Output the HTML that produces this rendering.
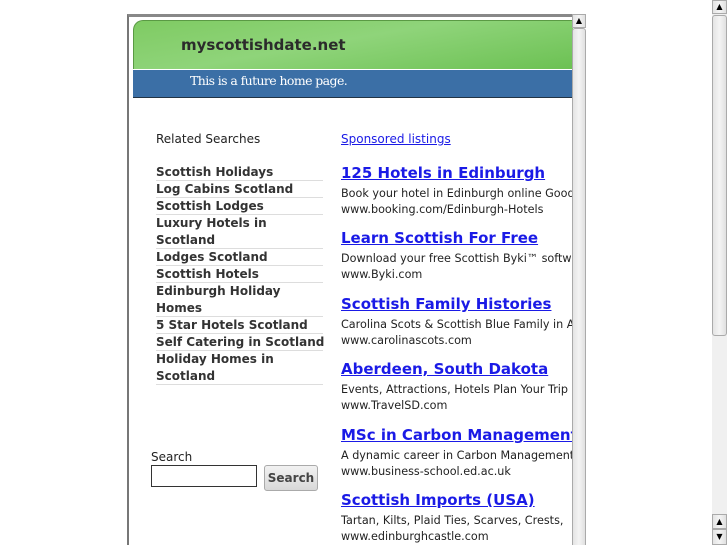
<!DOCTYPE html>
<html><head><style>
html,body{margin:0;width:727px;height:545px;overflow:hidden}
body{background:#fff;font-family:"DejaVu Sans","Liberation Sans",sans-serif;position:relative}
.a{position:absolute}
.frame{left:127px;top:14px;width:458px;height:531px;border-left:2px solid #777;border-top:3px solid #888;background:#fff;box-sizing:border-box}
.green{left:133px;top:20px;width:439px;height:48px;border-radius:10px 0 0 0;background:linear-gradient(170deg,#7fcb63 0%,#8fd47a 45%,#6cc153 100%);border-top:1px solid #5a9a44;border-left:1px solid #5a9a44}
.blue{left:133px;top:69px;width:439px;height:27px;background:#3b6fa6;border-top:1px solid #fff;border-bottom:1px solid #234}
.list div{font-weight:bold;font-size:12px;color:#333;line-height:17px;box-shadow:inset 0 -1px 0 #ddd;white-space:nowrap}
.list div.w{white-space:normal}
.ad{position:absolute;left:341px;width:231px;overflow:hidden;white-space:nowrap}
.ad b{display:block;font-size:15px;color:#1a1ae6;text-decoration:underline;line-height:21px;margin-bottom:2px}
.ad span{display:block;font-size:11.2px;color:#222;line-height:16px}
.sb{background:linear-gradient(90deg,#e4e4e4,#f4f4f4,#e0e0e0);border:1px solid #aaa;box-sizing:border-box}
</style></head><body>
<div class="a frame"></div>
<div class="a green"></div>
<div class="a" style="left:181px;top:36px;font-weight:bold;font-size:15px;color:#2b2b2b">myscottishdate.net</div>
<div class="a blue"></div>
<div class="a" style="left:190px;top:73px;font-family:'DejaVu Serif',serif;font-size:12.5px;letter-spacing:-0.6px;color:#fff">This is a future home page.</div>
<div class="a" style="left:156px;top:132px;font-size:12px;color:#222">Related Searches</div>
<div class="a" style="left:341px;top:132px;font-size:12px;color:#1a1ae6;text-decoration:underline">Sponsored listings</div>
<div class="a list" style="left:156px;top:164px;width:167px">
<div>Scottish Holidays</div><div>Log Cabins Scotland</div><div>Scottish Lodges</div><div class="w">Luxury Hotels in Scotland</div><div>Lodges Scotland</div><div>Scottish Hotels</div><div class="w">Edinburgh Holiday Homes</div><div>5 Star Hotels Scotland</div><div>Self Catering in Scotland</div><div class="w">Holiday Homes in Scotland</div>
</div>
<div class="ad" style="top:163px"><b>125 Hotels in Edinburgh</b><span>Book your hotel in Edinburgh online Good</span><span>www.booking.com/Edinburgh-Hotels</span></div>
<div class="ad" style="top:228px"><b>Learn Scottish For Free</b><span>Download your free Scottish Byki™ software</span><span>www.Byki.com</span></div>
<div class="ad" style="top:294px"><b>Scottish Family Histories</b><span>Carolina Scots &amp; Scottish Blue Family in A</span><span>www.carolinascots.com</span></div>
<div class="ad" style="top:359px"><b>Aberdeen, South Dakota</b><span>Events, Attractions, Hotels Plan Your Trip</span><span>www.TravelSD.com</span></div>
<div class="ad" style="top:425px"><b>MSc in Carbon Management</b><span>A dynamic career in Carbon Management</span><span>www.business-school.ed.ac.uk</span></div>
<div class="ad" style="top:490px"><b>Scottish Imports (USA)</b><span>Tartan, Kilts, Plaid Ties, Scarves, Crests,</span><span>www.edinburghcastle.com</span></div>
<div class="a" style="left:151px;top:450px;font-size:12px;color:#222">Search</div>
<div class="a" style="left:151px;top:465px;width:106px;height:22px;border:1px solid #333;box-sizing:border-box"></div>
<div class="a" style="left:264px;top:465px;width:54px;height:26px;border:1px solid #aaa;border-radius:3px;background:linear-gradient(#f2f2f2,#d8d8d8);box-sizing:border-box;font-weight:bold;font-size:12px;color:#444;text-align:center;line-height:24px">Search</div>
<div class="a sb" style="left:572px;top:14px;width:14px;height:14px;font-size:8px;text-align:center;line-height:12px">▲</div>
<div class="a sb" style="left:572px;top:28px;width:14px;height:520px;border-radius:3px"></div>
<div class="a" style="left:712px;top:0;width:15px;height:545px;background:#f0f0f0"></div>
<div class="a sb" style="left:712px;top:0;width:15px;height:14px;font-size:8px;text-align:center;line-height:12px">▲</div>
<div class="a sb" style="left:712px;top:15px;width:15px;height:321px;border-radius:3px"></div>
<div class="a sb" style="left:712px;top:514px;width:15px;height:15px;font-size:8px;text-align:center;line-height:13px">▲</div>
<div class="a sb" style="left:712px;top:529px;width:15px;height:16px;font-size:8px;text-align:center;line-height:14px">▼</div>
</body></html>
